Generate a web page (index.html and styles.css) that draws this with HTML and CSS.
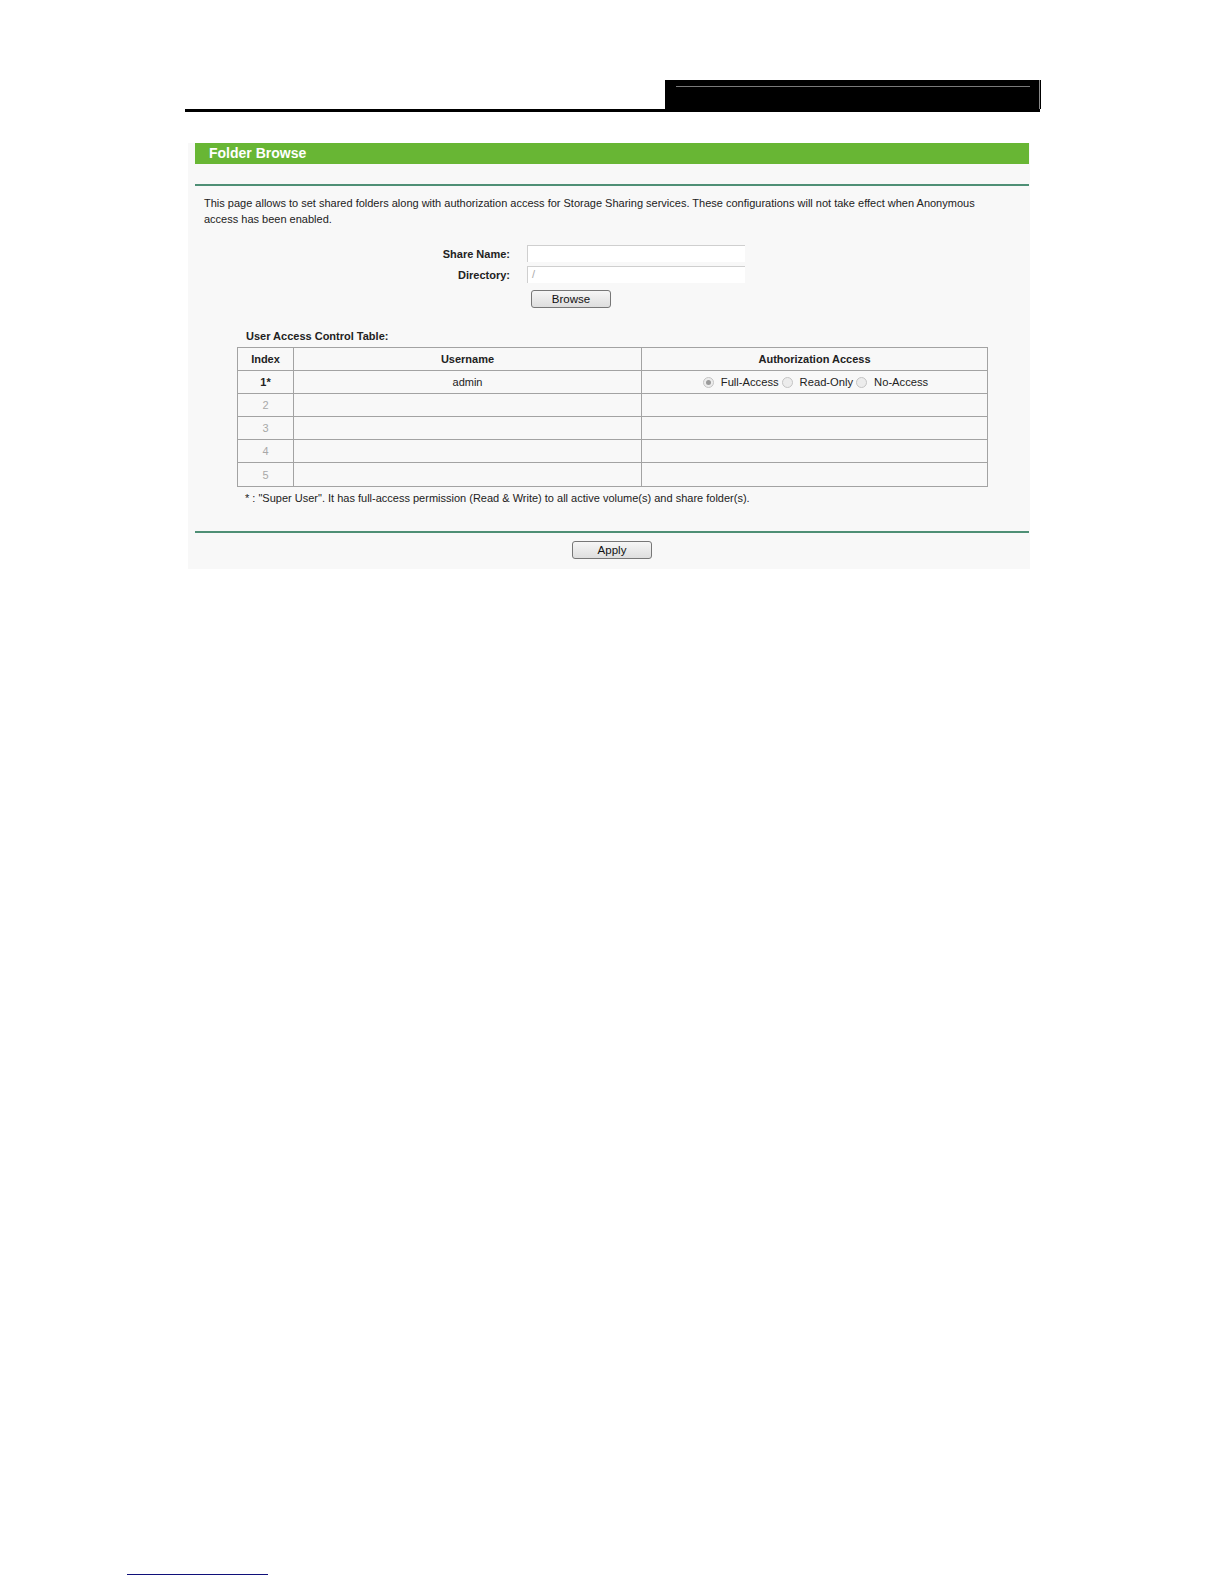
FILE: index.html
```html
<!DOCTYPE html>
<html lang="en">
<head>
<meta charset="utf-8">
<title>Folder Browse</title>
<link rel="stylesheet" href="styles.css">
</head>
<body>
<div class="page">
  <div class="header">
    <div class="header-box"><div class="header-rule"></div></div>
  </div>

  <div class="panel">
    <div class="title-bar">Folder Browse</div>
    <div class="rule rule-top"></div>
    <p class="desc">This page allows to set shared folders along with authorization access for Storage Sharing services. These configurations will not take effect when Anonymous access has been enabled.</p>

    <div class="form">
      <div class="form-row">
        <label class="form-label">Share Name:</label>
        <div class="field"></div>
      </div>
      <div class="form-row">
        <label class="form-label">Directory:</label>
        <div class="field"><span class="placeholder">/</span></div>
      </div>
      <div class="form-row">
        <span class="form-label"></span>
        <button class="btn btn-browse">Browse</button>
      </div>
    </div>

    <div class="table-title">User Access Control Table:</div>
    <table class="uac">
      <colgroup>
        <col class="c-index"><col class="c-user"><col class="c-auth">
      </colgroup>
      <thead>
        <tr><th>Index</th><th>Username</th><th>Authorization Access</th></tr>
      </thead>
      <tbody>
        <tr>
          <td class="idx idx-super">1*</td>
          <td>admin</td>
          <td>
            <span class="radio-group">
              <span class="radio checked"></span><span class="radio-label">Full-Access</span>
              <span class="radio"></span><span class="radio-label">Read-Only</span>
              <span class="radio"></span><span class="radio-label">No-Access</span>
            </span>
          </td>
        </tr>
        <tr><td class="idx">2</td><td></td><td></td></tr>
        <tr><td class="idx">3</td><td></td><td></td></tr>
        <tr><td class="idx">4</td><td></td><td></td></tr>
        <tr class="last"><td class="idx">5</td><td></td><td></td></tr>
      </tbody>
    </table>
    <p class="note">* : "Super User". It has full-access permission (Read &amp; Write) to all active volume(s) and share folder(s).</p>

    <div class="rule rule-bottom"></div>
    <div class="actions"><button class="btn btn-apply">Apply</button></div>
  </div>

  <div class="footer-link"></div>
</div>
</body>
</html>
```

FILE: styles.css
```css
html, body {
  margin: 0;
  padding: 0;
  background: #ffffff;
}

body {
  font-family: "Liberation Sans", Arial, sans-serif;
  color: #1a1a1a;
  width: 1224px;
  height: 1584px;
  overflow: hidden;
}

.page {
  padding-top: 80px;
}

/* ---------- page header ---------- */
.header {
  margin-left: 185px;
  width: 855px;
  display: flex;
  justify-content: flex-end;
  border-bottom: 3px solid #000;
}

.header-box {
  width: 375px;
  height: 29px;
  background: #000;
  border-right: 1px solid #8a8a8a;
  box-shadow: 1px 0 0 #000;
  padding-top: 6px;
  box-sizing: border-box;
}

.header-rule {
  margin: 0 9px 0 11px;
  height: 1px;
  background: #7a7a7a;
}

/* ---------- panel ---------- */
.panel {
  margin-top: 31px;
  margin-left: 188px;
  width: 842px;
  background: #f8f8f8;
  padding-bottom: 10px;
}

.title-bar {
  margin-left: 7px;
  width: 834px;
  height: 21px;
  line-height: 20px;
  box-sizing: border-box;
  padding-left: 14px;
  background: #68b634;
  color: #fff;
  font-weight: bold;
  font-size: 14px;
}

.rule {
  margin-left: 7px;
  width: 834px;
  height: 2px;
  background: #4e8f75;
}

.rule-top {
  margin-top: 20px;
}

.desc {
  margin: 9px 0 0 0;
  padding: 0 40px 0 16px;
  font-size: 11px;
  line-height: 16px;
  color: #222;
}

/* ---------- form ---------- */
.form {
  margin-top: 18px;
  display: flex;
  flex-direction: column;
  gap: 4px;
}

.form-row {
  display: flex;
  align-items: center;
  gap: 17px;
}

.form-label {
  width: 322px;
  text-align: right;
  font-weight: bold;
  font-size: 11px;
  color: #222;
}

.field {
  width: 218px;
  height: 17px;
  box-sizing: border-box;
  background: #fff;
  border-top: 1px solid #cfcfcf;
  border-left: 1px solid #cfcfcf;
  font-size: 11px;
  line-height: 15px;
  padding-left: 4px;
}

.placeholder {
  color: #aaa;
}

.btn {
  font-family: "Liberation Sans", Arial, sans-serif;
  font-size: 11.5px;
  color: #111;
  height: 18px;
  width: 80px;
  padding: 0;
  border: 1px solid #777;
  border-radius: 3px;
  background: linear-gradient(#f6f6f6, #dedede);
  line-height: 16px;
}

.btn-browse {
  margin-left: 4px;
  margin-top: 3px;
}

/* ---------- table ---------- */
.table-title {
  margin: 21px 0 0 58px;
  font-size: 11px;
  font-weight: bold;
  line-height: 14px;
  color: #222;
}

.uac {
  margin: 4px 0 0 49px;
  width: 750px;
  border-collapse: collapse;
  table-layout: fixed;
  font-size: 11px;
}

.c-index { width: 56px; }
.c-user { width: 348px; }
.c-auth { width: 346px; }

.uac th,
.uac td {
  border: 1px solid #a3a3a3;
  height: 22px;
  padding: 0;
  text-align: center;
  color: #222;
}

.uac .last td {
  height: 23px;
}

.uac th {
  font-weight: bold;
}

.uac .idx {
  color: #a8a8a8;
}

.uac .idx-super {
  color: #222;
  font-weight: bold;
}

.radio-group {
  display: inline-flex;
  align-items: center;
  padding-left: 5px;
  padding-top: 2px;
}

.radio {
  width: 9px;
  height: 9px;
  border-radius: 50%;
  border: 1px solid #c4c4c4;
  background: #ececec;
  position: relative;
  margin-right: 7px;
}

.radio.checked::after {
  content: "";
  position: absolute;
  left: 2px;
  top: 2px;
  width: 5px;
  height: 5px;
  border-radius: 50%;
  background: #9a9a9a;
}

.radio-label {
  margin-right: 3px;
  font-size: 11.2px;
}

.note {
  margin: 4px 0 0 57px;
  font-size: 11px;
  line-height: 14px;
  color: #222;
}

.rule-bottom {
  margin-top: 26px;
}

.actions {
  margin-top: 7px;
  padding-left: 384px;
}

/* ---------- footer ---------- */
.footer-link {
  margin: 1005px 0 0 127px;
  width: 141px;
  height: 1px;
  background: #10107a;
}
```
